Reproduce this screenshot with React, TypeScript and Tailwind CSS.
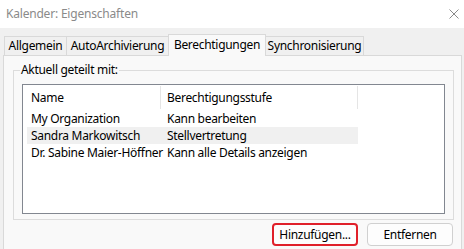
import React from 'react'

const rows = [
  { name: 'My Organization', level: 'Kann bearbeiten', selected: false },
  { name: 'Sandra Markowitsch', level: 'Stellvertretung', selected: true },
  { name: 'Dr. Sabine Maier-Höffner', level: 'Kann alle Details anzeigen', selected: false },
]

const tabs = [
  { label: 'Allgemein', w: 'w-[63px]', active: false },
  { label: 'AutoArchivierung', w: 'w-[101px]', active: false },
  { label: 'Berechtigungen', w: 'w-[98px]', active: true },
  { label: 'Synchronisierung', w: 'w-[98px]', active: false },
]

export default function App() {
  return (
    <div
      className="w-[464px] h-[249px] overflow-hidden bg-[#f0f0f0] text-[12px] tracking-[-0.3px] text-black"
      style={{ fontFamily: '"Noto Sans", "Open Sans", sans-serif' }}
    >
      {/* title bar */}
      <div className="h-[28px] bg-white flex items-center justify-between pl-[6px] pr-[4px]">
        <span className="text-[#8a8a8a] leading-none tracking-[-0.2px]">Kalender: Eigenschaften</span>
        <svg width="10" height="10" viewBox="0 0 10 10" className="mr-[1px]">
          <path d="M0.5 0.5 L9.5 9.5 M9.5 0.5 L0.5 9.5" stroke="#8a8a8a" strokeWidth="1" />
        </svg>
      </div>

      <div className="pt-[6px]">
        {/* tabs */}
        <div className="flex items-end h-[21px] pl-[4px] relative z-10">
          {tabs.map((t, i) => (
            <div
              key={t.label}
              className={
                t.active
                  ? `${t.w} h-[22px] -mb-px bg-[#f9f9f9] border border-b-0 border-[#d9d9d9] flex items-center justify-center pb-[2px]`
                  : `${t.w} h-[19px] bg-[#f0f0f0] border-t border-[#d9d9d9] flex items-center justify-center ${
                      i === 0 ? 'border-l border-r' : ''
                    } ${i === tabs.length - 1 ? 'border-r' : ''}`
              }
            >
              <span className="leading-none">{t.label}</span>
            </div>
          ))}
        </div>

        {/* panel */}
        <div className="ml-[3px] w-[459px] h-[200px] bg-[#f9f9f9] border border-[#d9d9d9] pl-[9px] pr-[7px] pt-[14px]">
          <div className="relative h-[150px] border border-[#dcdcdc] pl-[8px] pr-[8px] pt-[13px]">
            <span className="absolute -top-[9px] left-[6px] bg-[#f9f9f9] px-[1px] leading-[16px]">
              Aktuell geteilt mit:
            </span>
            <div className="h-[130px] bg-white border border-[#828790]">
              <div className="flex h-[25px]">
                <div className="w-[138px] flex items-center pl-[8px] border-r border-[#e5e5e5] my-px">Name</div>
                <div className="w-[197px] flex items-center pl-[6px] border-r border-[#e5e5e5] my-px">
                  Berechtigungsstufe
                </div>
              </div>
              {rows.map((r) => (
                <div
                  key={r.name}
                  className={`ml-[4px] w-[331px] h-[17px] flex items-center ${r.selected ? 'bg-[#f0f0f0]' : ''}`}
                >
                  <div className="w-[133px] pl-[4px] whitespace-nowrap">{r.name}</div>
                  <div className="pl-[7px] whitespace-nowrap">{r.level}</div>
                </div>
              ))}
            </div>
          </div>

          <div className="flex justify-end gap-[9px] mt-[3px] mr-[1px]">
            <button className="w-[86px] h-[23px] rounded-[4px] border-2 border-[#e0202a] bg-[#fdfdfd] flex items-center justify-center leading-none">
              Hinzufügen...
            </button>
            <button className="w-[86px] h-[23px] rounded-[4px] border border-[#d0d0d0] bg-[#fdfdfd] flex items-center justify-center leading-none">
              Entfernen
            </button>
          </div>
        </div>
      </div>
    </div>
  )
}
